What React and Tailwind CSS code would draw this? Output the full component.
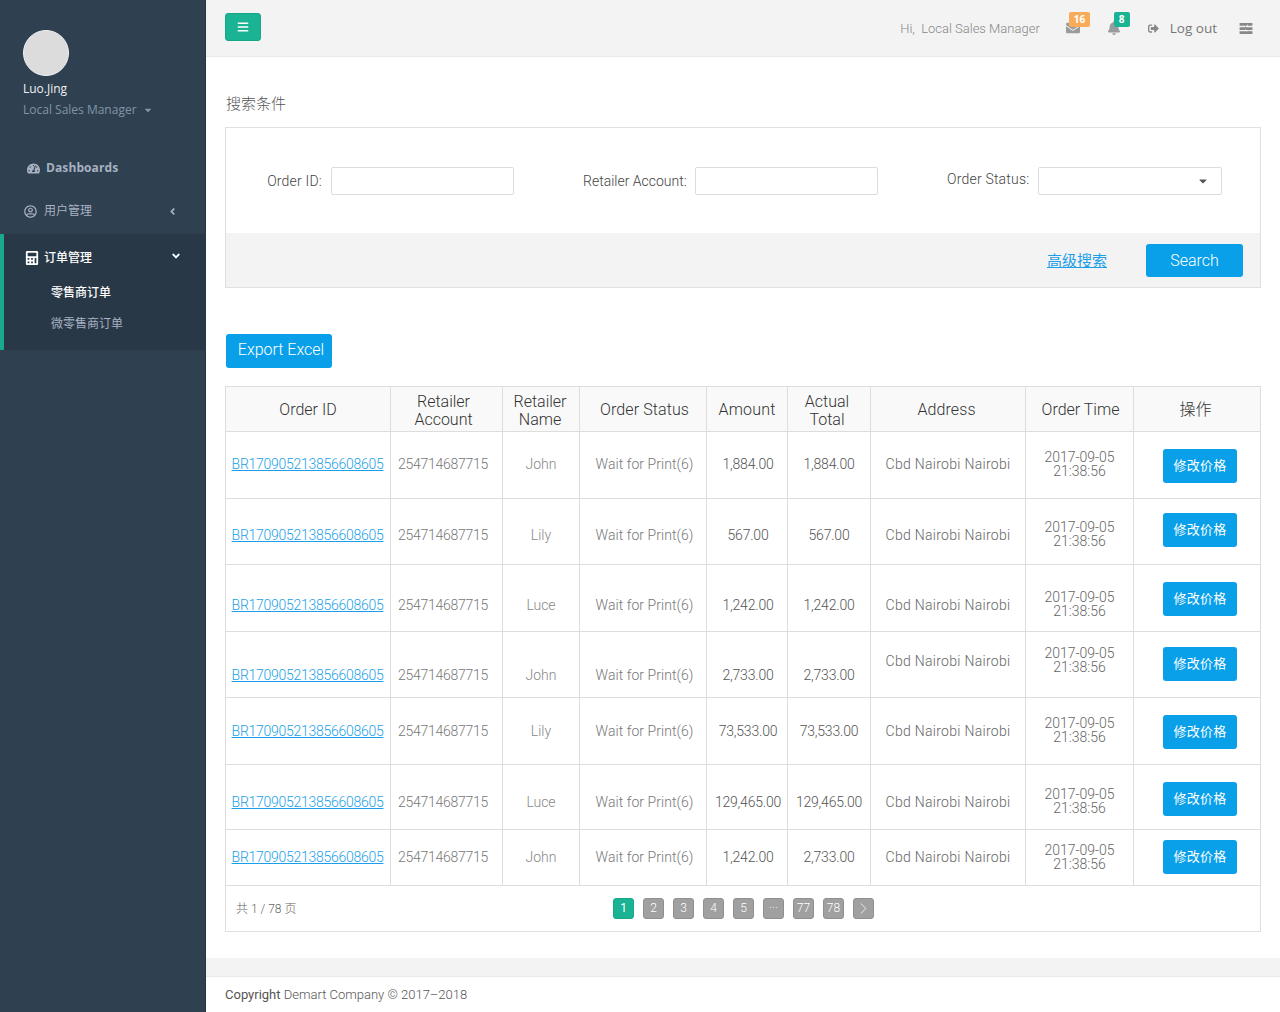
import React from 'react';
import { ChevronRight } from 'lucide-react';
import { FaBars, FaEnvelope, FaBell, FaSignOutAlt, FaTachometerAlt, FaRegUserCircle, FaCalculator, FaAngleLeft, FaAngleDown, FaCaretDown } from 'react-icons/fa';

const rows = [
  { h: 'h-[67px]', text: 'pt-[24px]', addr: 'pt-[24px]', time: 'pt-[18px]', btn: 'pt-[17px]', name: 'John', amount: '1,884.00', total: '1,884.00' },
  { h: 'h-[66px]', text: 'pt-[28px]', addr: 'pt-[28px]', time: 'pt-[21px]', btn: 'pt-[14px]', name: 'Lily', amount: '567.00', total: '567.00' },
  { h: 'h-[67px]', text: 'pt-[32px]', addr: 'pt-[32px]', time: 'pt-[25px]', btn: 'pt-[17px]', name: 'Luce', amount: '1,242.00', total: '1,242.00' },
  { h: 'h-[66px]', text: 'pt-[35px]', addr: 'pt-[21px]', time: 'pt-[14px]', btn: 'pt-[15px]', name: 'John', amount: '2,733.00', total: '2,733.00' },
  { h: 'h-[67px]', text: 'pt-[25px]', addr: 'pt-[25px]', time: 'pt-[18px]', btn: 'pt-[17px]', name: 'Lily', amount: '73,533.00', total: '73,533.00' },
  { h: 'h-[65px]', text: 'pt-[29px]', addr: 'pt-[29px]', time: 'pt-[22px]', btn: 'pt-[17px]', name: 'Luce', amount: '129,465.00', total: '129,465.00' },
  { h: 'h-[56px]', text: 'pt-[19px]', addr: 'pt-[19px]', time: 'pt-[13px]', btn: 'pt-[10px]', name: 'John', amount: '1,242.00', total: '2,733.00' },
];

const pages = ['2', '3', '4', '5', '···', '77', '78'];

function Sidebar() {
  return (
    <aside className="w-[206px] shrink-0 bg-[#2f4050] border-r border-[#263444] font-['Open_Sans','Noto_Sans_CJK_SC',sans-serif]">
      <div className="pt-[30px] pl-[23px] h-[146px]">
        <div className="w-[46px] h-[46px] rounded-full bg-[#dcdcdc] border border-[#f3f3f3]"></div>
        <div className="mt-[4px] text-[12px] leading-[18px] text-[#eef1f4]">Luo.Jing</div>
        <div className="mt-[3px] flex items-center text-[12px] leading-[18px] text-[#8095a8]">
          Local Sales Manager
          <FaCaretDown className="ml-[6px] text-[10px]" />
        </div>
      </div>
      <div className="h-[44px] flex items-center pl-[27px] text-[12px] tracking-[0.1px] font-bold text-[#a7b1c2]">
        <FaTachometerAlt className="text-[13px] mr-[6px]" />
        Dashboards
      </div>
      <div className="h-[44px] pb-[2px] flex items-center pl-[24px] pr-[27px] text-[12px] text-[#a7b1c2]">
        <FaRegUserCircle className="text-[13px] mr-[7px]" />
        <span className="flex-1">用户管理</span>
        <FaAngleLeft className="text-[11px]" />
      </div>
      <div className="h-[116px] bg-[#293846] border-l-4 border-[#19aa8d]">
        <div className="h-[47px] flex items-center pl-[21px] pr-[23px] text-[12px] font-medium text-white">
          <FaCalculator className="text-[14px] mr-[5px]" />
          <span className="flex-1">订单管理</span>
          <FaAngleDown className="text-[12px] -mt-[3px]" />
        </div>
        <div className="pl-[47px] text-[12px] leading-[18px] font-medium text-white mt-[3px]">零售商订单</div>
        <div className="pl-[47px] text-[12px] leading-[18px] text-[#a7b1c2] mt-[13px]">微零售商订单</div>
      </div>
    </aside>
  );
}

function TopBar() {
  return (
    <header className="h-[57px] shrink-0 bg-[#f3f3f4] border-b border-[#e7eaec] flex items-center pl-[19px] pr-[27px] text-[#999c9e]">
      <button className="w-[36px] h-[28px] -mt-[2px] rounded-[3px] bg-[#1ab394] border border-[#18a689] flex items-center justify-center text-white">
        <FaBars className="text-[12px]" />
      </button>
      <div className="ml-auto pt-[2px] text-[13px] font-light text-[#888]">Hi,&nbsp;&nbsp;Local Sales Manager</div>
      <div className="relative ml-[26px] text-[#999c9e]">
        <FaEnvelope className="text-[14px]" />
        <span className="absolute -top-[9px] left-[3px] h-[15px] px-[5px] rounded-[2px] bg-[#f8ac59] text-white text-[10px] leading-[15px] font-bold font-['Open_Sans',sans-serif]">16</span>
      </div>
      <div className="relative ml-[27px] text-[#999c9e]">
        <FaBell className="text-[14px]" />
        <span className="absolute -top-[9px] left-[7px] h-[15px] px-[5px] rounded-[2px] bg-[#1ab394] text-white text-[10px] leading-[15px] font-bold font-['Open_Sans',sans-serif]">8</span>
      </div>
      <FaSignOutAlt className="ml-[27px] text-[11px] text-[#888]" />
      <span className="ml-[11px] text-[13.5px] leading-[18px] -mt-[1px] text-[#777] font-['Open_Sans',sans-serif]">Log out</span>
      <svg viewBox="0 0 14 12" className="ml-[22px] w-[14px] h-[11px] fill-[#888]">
        <path d="M0 0h14v3H9V2H8v1H0zM0 4.5h6V4h1v.5h7v3H7V7H6v.5H0zM0 9h10V8.5h1V9h3v3H0z" />
      </svg>
    </header>
  );
}

function SearchPanel() {
  return (
    <section className="border border-[#e0e0e0] h-[161px] flex flex-col">
      <div className="h-[105px] flex items-center text-[14px] text-[#444] font-light tracking-[0.2px]">
        <label className="w-[96px] mt-[2px] text-right">Order ID:</label>
        <input className="ml-[9px] w-[183px] h-[28px] border border-[#dcdcdc] rounded-[2px] bg-white" />
        <label className="ml-[69px] w-[105px] mt-[2px] tracking-[0px] whitespace-nowrap">Retailer Account:</label>
        <input className="ml-[7px] w-[183px] h-[28px] border border-[#dcdcdc] rounded-[2px] bg-white" />
        <label className="ml-[69px] w-[83px] -mt-[3px] whitespace-nowrap">Order Status:</label>
        <div className="ml-[8px] w-[184px] h-[28px] border border-[#dcdcdc] rounded-[2px] bg-white flex items-center justify-end pr-[12px] text-[#555]">
          <FaCaretDown className="text-[12px]" />
        </div>
      </div>
      <div className="flex-1 bg-[#f3f3f4] flex items-start justify-end pr-[17px] pt-[11px]">
        <a className="mt-[7px] text-[15px] leading-[20px] text-[#1c9fe8] underline">高级搜索</a>
        <button className="ml-[39px] w-[97px] h-[33px] rounded-[3px] bg-[#0a9fe9] text-white text-[16px] font-light">Search</button>
      </div>
    </section>
  );
}

function OrderTable() {
  const th = 'border border-[#ddd] bg-[#f9f9f9] font-light text-[16px] leading-[18px] text-[#333] align-middle text-center pt-[1px]';
  const two = 'border border-[#ddd] bg-[#f9f9f9] font-light text-[16px] leading-[18px] text-[#333] align-middle text-center pt-[4px]';
  const td = 'border border-[#ddd] align-top text-center';
  return (
    <table className="w-[1035px] table-fixed border-collapse text-[14px] leading-[16px]">
      <colgroup>
        <col className="w-[165px]" />
        <col className="w-[112px]" />
        <col className="w-[77px]" />
        <col className="w-[127px]" />
        <col className="w-[81px]" />
        <col className="w-[83px]" />
        <col className="w-[155px]" />
        <col className="w-[108px]" />
        <col className="w-[127px]" />
      </colgroup>
      <thead>
        <tr className="h-[45px]">
          <th className={th}>Order ID</th>
          <th className={`${two} pr-[6px]`}>Retailer<br />Account</th>
          <th className={`${two} pr-[2px]`}>Retailer<br />Name</th>
          <th className={`${th} pl-[3px] tracking-[0.1px]`}>Order Status</th>
          <th className={`${th} text-[15px] tracking-[0.2px]`}>Amount</th>
          <th className={`${two} pr-[4px]`}>Actual<br />Total</th>
          <th className={`${th} text-[15px] tracking-[0.1px] pr-[3px]`}>Address</th>
          <th className={`${th} pl-[2px]`}>Order Time</th>
          <th className={`${th} text-[15px] pr-[3px]`}>操作</th>
        </tr>
      </thead>
      <tbody className="font-light">
        {rows.map((r, i) => (
          <tr key={i} className={r.h}>
            <td className={`${td} ${r.text} pr-[1px]`}><a className="text-[#1c9fe8] underline tracking-[-0.27px]">BR170905213856608605</a></td>
            <td className={`${td} ${r.text} pr-[7px] text-[#777] tracking-[-0.27px]`}>254714687715</td>
            <td className={`${td} ${r.text} text-[#888]`}>{r.name}</td>
            <td className={`${td} ${r.text} pl-[3px] text-[#777] tracking-[0.05px] whitespace-nowrap`}>Wait for Print(6)</td>
            <td className={`${td} ${r.text} pl-[2px] text-[#555] tracking-[-0.2px]`}>{r.amount}</td>
            <td className={`${td} ${r.text} text-[#555] tracking-[-0.2px]`}>{r.total}</td>
            <td className={`${td} ${r.addr} text-[#666] tracking-[0.3px] whitespace-nowrap`}>Cbd Nairobi Nairobi</td>
            <td className={`${td} ${r.time} text-[#666] leading-[14px]`}>2017-09-05<br />21:38:56</td>
            <td className={`${td} ${r.btn} pl-[6px]`}>
              <button className="w-[74px] h-[34px] rounded-[3px] bg-[#0a9fe9] text-white text-[13px] font-normal tracking-[0.3px]">修改价格</button>
            </td>
          </tr>
        ))}
      </tbody>
    </table>
  );
}

function Pagination() {
  return (
    <div className="h-[46px] border border-t-0 border-[#e0e0e0] flex items-center pl-[10px]">
      <span className="mt-[1px] text-[12px] text-[#666] font-light w-[377px]">共 1 / 78 页</span>
      <div className="flex gap-[9px] -mt-[1px]">
        <span className="w-[21px] h-[21px] rounded-[3px] bg-[#1ab394] border border-[#18a689] text-white text-[12px] leading-[19px] text-center">1</span>
        {pages.map((p) => (
          <span key={p} className="w-[21px] h-[21px] rounded-[3px] bg-[#a0a0a0] border border-[#8f8f8f] text-white text-[12px] leading-[19px] text-center font-light">{p}</span>
        ))}
        <span className="w-[21px] h-[21px] rounded-[3px] bg-[#a0a0a0] border border-[#8f8f8f] text-white flex items-center justify-center">
          <ChevronRight size={19} strokeWidth={1} />
        </span>
      </div>
    </div>
  );
}

export default function App() {
  return (
    <div className="flex min-h-screen bg-white font-['Roboto','Noto_Sans_CJK_SC',sans-serif]">
      <Sidebar />
      <main className="flex-1 min-w-0 flex flex-col">
        <TopBar />
        <div className="flex-1 px-[19px]">
          <h2 className="mt-[35px] mb-[11px] pl-[1px] text-[15px] leading-[24px] font-light text-[#555]">搜索条件</h2>
          <SearchPanel />
          <button className="mt-[46px] mb-[18px] ml-[1px] block w-[106px] h-[34px] pb-[2px] pl-[4px] rounded-[3px] bg-[#0a9fe9] text-white text-[16px] font-light">Export Excel</button>
          <OrderTable />
          <Pagination />
        </div>
        <div className="h-[18px] mt-[26px] bg-[#f3f3f4]"></div>
        <footer className="h-[36px] border-t border-[#e7eaec] px-[19px] flex items-center text-[13px] font-light text-[#555]">
          <span className="font-normal">Copyright</span>&nbsp;Demart Company © 2017–2018
        </footer>
      </main>
    </div>
  );
}
